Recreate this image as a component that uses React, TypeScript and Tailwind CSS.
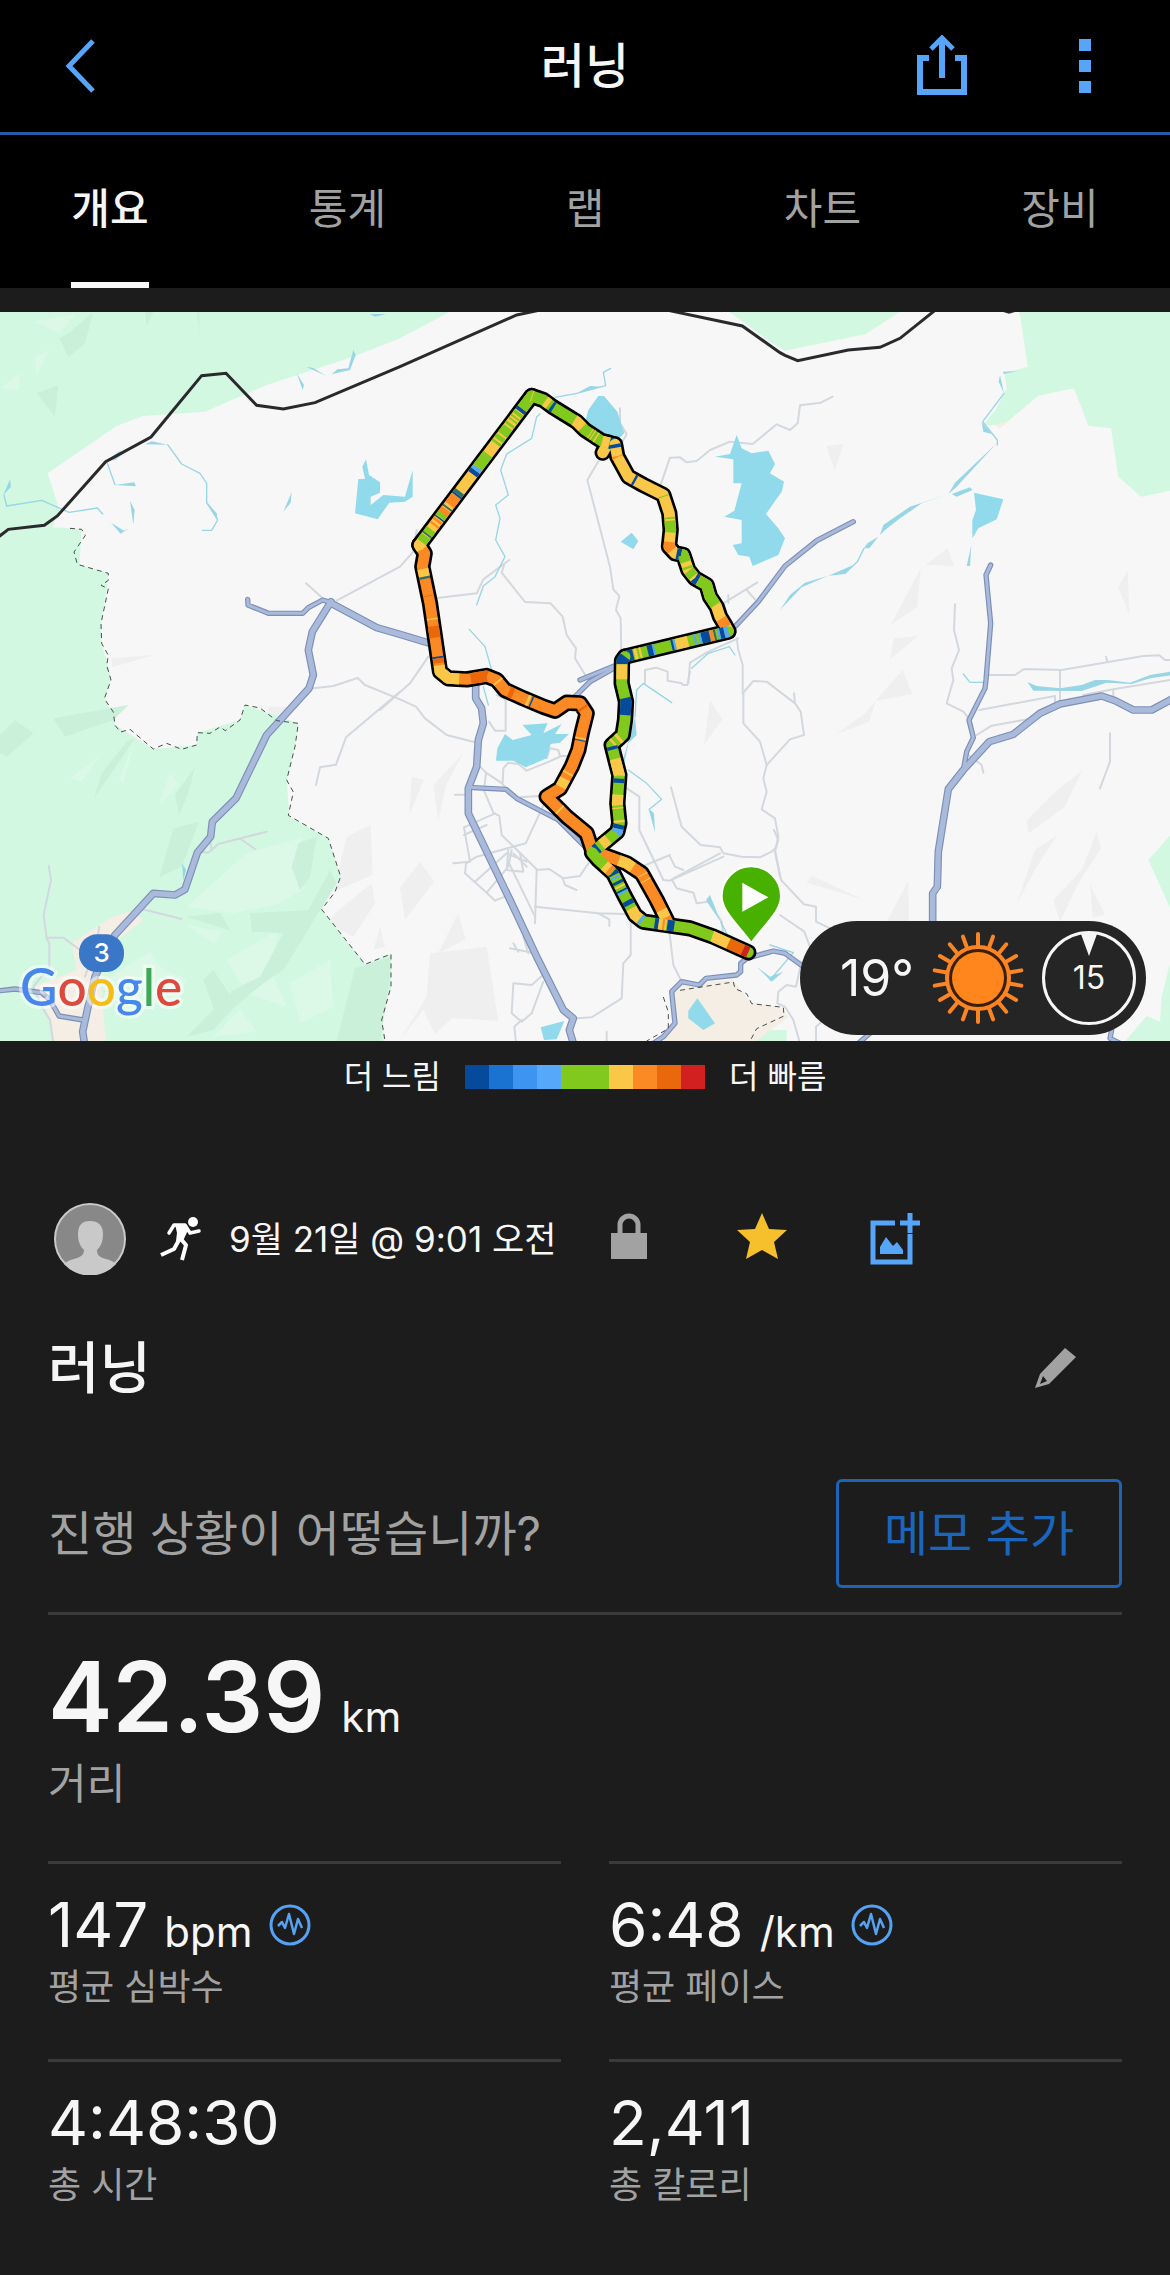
import React from "react";

type Tile = "nw" | "n" | "ne" | "sw" | "s" | "se";
type Shape = [Tile, string];
// start %, length %, color
type Band = [number, number, string];
type Leg = { d: string; base: string; bands: Band[] };

const TILE_OFFSET: Record<Tile, string> = {
  nw: "translate(0 -6)",
  n: "translate(1140 -6)",
  ne: "translate(2310 -6)",
  sw: "translate(0 1074)",
  s: "translate(1140 1074)",
  se: "translate(2310 1074)",
};

const NAVY = "#054a9b";
const BLUE = "#56a8fb";
const GREEN = "#82c91e";
const YELLOW = "#fac748";
const ORANGE = "#fb8a24";
const DEEP = "#ea670c";
const RED = "#d22020";
const TEAL = "#2f6f6b";

const FORESTS: Shape[] = [
  ["nw", "M0 0H1360L1200 85L1060 140L800 225L615 305L430 318L350 348L143 490L178 600L158 652L245 657L238 765L325 790L320 840L303 940L305 1000L328 1080L333 1110L313 1170L340 1210L345 1245L460 1317L590 1305L592 1268L720 1230L735 1185L895 1240L885 1310L860 1410L868 1520L985 1585L1022 1700L965 1798L1095 1963L1173 1932L1173 2030L1145 2130L1155 2200H0Z"],
  ["ne", "M-130 0L0 95L45 122L285 73L400 0Z"],
  ["ne", "M745 0H1210V540L1113 560L1045 500L1023 355L955 347L912 235L805 257L700 345L640 345L680 295L710 235L703 190L773 170L752 25Z"],
  ["se", "M1210 485L1135 570L1210 735Z"],
  ["se", "M1210 840L1175 980L1170 1055L1130 1038L1060 1120H1210Z"],
  ["s", "M1120 1120L1165 1080H1220V1120Z"],
];

const FOREST_DARK: Shape[] = [
  ["nw", "M200 75L280 6L255 100L205 142L178 85Z"],
  ["nw", "M110 250L175 225L165 320Z"],
  ["nw", "M435 6H460L440 48Z"],
  ["nw", "M590 6H598V70Z"],
  ["sw", "M0 195L45 150L100 190L20 262L0 250Z"],
  ["sw", "M160 145L385 105L340 150L195 200Z"],
  ["sw", "M380 215L405 205L330 315L282 385L305 310Z"],
  ["sw", "M585 290L565 370L537 435L525 375Z"],
  ["sw", "M520 475L597 455L545 590L478 622Z"],
  ["sw", "M560 740L660 728L692 782Z"],
  ["sw", "M750 730L925 720L990 600L1010 640L960 720L900 820L850 900L790 940L705 1010L640 1080L560 1100L700 960L780 920L850 790L755 785Z"],
  ["sw", "M1065 895L1173 860L1165 960L1140 1113H1010Z"],
  ["sw", "M610 930L640 900L690 975L650 1040Z"],
  ["sw", "M895 520L950 500L930 620L900 660L875 590Z"],
];

const FOREST_LIGHT: Shape[] = [
  ["nw", "M105 35L225 12L180 70Z"],
  ["nw", "M105 140L150 120L108 195Z"],
  ["nw", "M0 235L60 190L55 240Z"],
  ["sw", "M298 258L210 325L245 333Z"],
  ["sw", "M400 225L357 330L370 340Z"],
  ["sw", "M510 310L540 345L478 402Z"],
  ["sw", "M560 710L740 550L905 503L880 600L915 655L840 700L700 730Z"],
  ["sw", "M560 765L662 785L642 822Z"],
  ["sw", "M330 920L450 845L480 890L560 930L520 1010L400 990Z"],
  ["sw", "M680 870L835 780L810 900L860 1010L740 970Z"],
  ["sw", "M870 940L990 870L1000 1010L900 1060Z"],
  ["sw", "M640 1100L720 1020L770 1085Z"],
];

const SHADES: Shape[] = [
  ["nw", "M335 1045L465 1035L335 1072Z"],
  ["sw", "M803 110H860L840 150L805 140Z"],
  ["sw", "M1040 500L1112 465L1118 615L1000 665Z"],
  ["sw", "M1005 730L1115 640L1125 700L1060 800L985 760Z"],
  ["sw", "M1140 770L1155 830L1120 840Z"],
  ["s", "M250 250L200 340L175 450L160 345Z"],
  ["s", "M95 320L132 330L88 435Z"],
  ["s", "M120 575L162 635L75 750L60 655Z"],
  ["s", "M150 850L320 830L355 1052L215 1045L165 1092L130 1020L60 1110L140 980Z"],
  ["s", "M235 730L257 808L175 850Z"],
  ["s", "M990 90L1027 148L972 225Z"],
  ["ne", "M168 408L220 402L195 480Z"],
  ["ne", "M452 775L442 890L362 945Z"],
  ["ne", "M532 715L552 768L467 765Z"],
  ["ne", "M372 985L445 978L360 1048Z"],
  ["ne", "M1073 780L1078 915L1045 832Z"],
  ["se", "M398 0L427 72L318 92L298 155L200 192L285 130Z"],
  ["se", "M935 303L885 410L775 490L770 452L860 362Z"],
  ["se", "M860 497L795 600L740 702L795 540Z"],
  ["se", "M980 485L993 535L925 640L870 755L850 690L935 600Z"],
  ["se", "M960 643L1005 735L968 742Z"],
  ["se", "M415 632L417 755H350Z"],
  ["se", "M125 617L278 688L110 638Z"],
];

const TOWNS: Shape[] = [
  ["sw", "M335 740L400 722L430 750L330 830L300 910L318 1120H165L140 1020L100 950L230 900L215 820Z"],
  ["s", "M900 940L1060 930L1110 995L1200 1012L1225 1040L1180 1075L1120 1120H850L880 1060L880 965Z"],
  ["ne", "M675 345L722 330L690 355Z"],
];

const LAKES: Shape[] = [
  ["nw", "M1098 448L1107 495L1140 517V548L1112 560V585L1150 555L1215 560L1238 480V560L1215 575L1168 578L1133 628L1065 610L1075 507H1095L1087 470Z"],
  ["n", "M655 258H672L712 305L733 370L705 395L617 330L625 300Z"],
  ["n", "M755 668L775 693L760 718L722 695Z"],
  ["n", "M1070 375L1085 415L1115 430L1165 422L1185 462L1170 490L1212 515L1205 545L1158 612L1195 655L1215 685L1195 735L1118 768L1108 740L1075 735L1058 705L1085 700V630L1033 620L1063 602L1085 520H1060V448L1005 440L1050 432Z"],
  ["ne", "M612 548L700 568L680 628L625 655L607 685V630L618 600Z"],
  ["s", "M375 192L398 210L455 195L427 165L503 160L490 190L545 162L525 192H567L540 218L512 222L500 265L437 292L400 272H348L352 235Z"],
  ["s", "M482 1072L553 1053L530 1108L492 1110Z"],
  ["s", "M952 985L1005 1060L970 1080L925 1045V1022Z"],
];

const STREAM_FILLS: Shape[] = [
  ["nw", "M1110 12H1158L1125 20Z"],
  ["nw", "M1060 120L1067 135L1050 180L995 193L1012 178L1045 175Z"],
  ["nw", "M918 170L940 174L978 197Z"],
  ["nw", "M890 190L912 225L908 240Z"],
  ["nw", "M320 452L355 425L385 420L345 450Z"],
  ["nw", "M435 403L455 394L503 404Z"],
  ["nw", "M345 525L403 517L408 529Z"],
  ["nw", "M390 573L404 600L400 645Z"],
  ["nw", "M333 638L372 662L388 655L362 671Z"],
  ["nw", "M875 547L872 578L850 605Z"],
  ["nw", "M30 508L33 530L10 555Z"],
  ["nw", "M620 575L650 610L653 632Z"],
  ["n", "M590 250L630 228L665 230Z"],
  ["ne", "M635 335L665 372L640 365Z"],
  ["ne", "M700 185L745 183L700 192Z"],
  ["ne", "M690 195L702 250L686 215Z"],
  ["ne", "M680 400L560 530L535 553L555 518Z"],
  ["ne", "M535 552L455 580L390 625L345 660L330 675L340 645L420 590Z"],
  ["ne", "M600 532L608 540L560 560L545 552Z"],
  ["ne", "M325 680L298 715L282 715L292 700Z"],
  ["ne", "M250 765L225 792L175 797Z"],
  ["ne", "M175 797L95 832L30 900L60 855L105 818Z"],
  ["ne", "M604 705L600 768H590Z"],
  ["se", "M772 36L800 48L870 55L935 45L975 30L1015 30L1080 38L1140 15L1210 4V15L1140 25L1085 42L1010 38L935 63L790 62Z"],
  ["s", "M805 415L822 430L825 487Z"],
  ["s", "M990 675L1000 700L1022 755L978 690Z"],
  ["s", "M1130 890L1170 920L1210 905L1175 935Z"],
  ["s", "M765 140L770 195L745 220L733 280L730 265L745 215Z"],
  ["sw", "M546 580L558 600L550 632Z"],
];

const STREAMS: Shape[] = [
  ["nw", "M322 460L345 524"],
  ["nw", "M503 404L545 462L600 490L620 520V578L653 630L635 661H607"],
  ["nw", "M12 555L20 588L125 571L207 607L292 594L308 612"],
  ["n", "M692 175L670 187L677 227L590 250L525 262"],
  ["n", "M480 312L470 320L455 385L380 432L362 480L385 555L347 585L360 625L347 690L375 740L345 800L310 828L290 885"],
  ["n", "M268 958L315 1010L335 1080"],
  ["n", "M935 1075L985 1030L1048 1010L1065 1035"],
  ["ne", "M702 250L638 335L682 390V405"],
  ["ne", "M282 715L262 755L225 790"],
  ["s", "M310 50L325 105"],
  ["s", "M765 140L770 60L790 40L875 98"],
  ["s", "M745 300L800 340L845 388L808 418"],
  ["s", "M1022 755L1045 800"],
  ["se", "M0 825L70 848L0 930"],
  ["se", "M580 12L600 37H650"],
];

const STREETS: Shape[] = [
  ["nw", "M918 820L965 862"],
  ["nw", "M1010 872L1200 770L1240 725L1250 660"],
  ["n", "M165 865L290 850L310 808L388 750"],
  ["n", "M372 765L365 788L435 876L512 880L548 920L560 975L588 1015L585 1045L625 1110"],
  ["n", "M663 440L622 510L690 770L700 838L718 858L708 900L722 925L724 1030"],
  ["n", "M720 295V340L740 372L725 400"],
  ["n", "M840 530L870 443L900 442L920 457L950 453L990 420L1050 395L1118 402L1190 343L1230 360L1253 340L1260 286L1322 278L1358 260"],
  ["n", "M1030 880L1132 817"],
  ["n", "M1100 840L1125 868"],
  ["n", "M1045 855V880"],
  ["n", "M1070 985L1075 1020L1088 1065V1150"],
  ["n", "M1075 985L985 1025L930 1058L925 1120"],
  ["n", "M795 1120V1080L828 1073L863 1085V1112L905 1120L908 1125H922L930 1085"],
  ["n", "M145 1040L90 1120L0 1200"],
  ["ne", "M555 883L552 960L567 1020L545 1075L550 1110L530 1180L580 1205L600 1230"],
  ["ne", "M655 1095H735L762 1077L875 1080L1120 1038L1168 1036L1185 1050H1210"],
  ["ne", "M1008 1040L1012 1055M870 1080V1180"],
  ["sw", "M940 55L1000 48L1073 24L1095 45L1200 88L1248 110L1275 145L1340 195L1425 217"],
  ["sw", "M1200 65L1038 202L1008 284L960 292L948 345"],
  ["sw", "M600 545L625 548L655 522L800 485M722 507L765 537M635 540L630 510"],
  ["sw", "M425 717L545 747"],
  ["sw", "M146 587L153 630L131 735L140 805L148 820V890L100 950L125 1010L150 1050L160 1120"],
  ["sw", "M140 803H190L240 840"],
  ["sw", "M298 770L290 820L255 920"],
  ["s", "M300 290L318 308L363 338L400 375"],
  ["s", "M368 338L370 295L385 278L415 282L440 302L500 278L545 258H560"],
  ["s", "M500 265L510 235L535 240L540 258"],
  ["s", "M327 155L345 182H377V90L350 75"],
  ["s", "M225 374H260M420 382L478 378"],
  ["s", "M318 308L312 362L340 428L358 438L365 495L470 598L465 760"],
  ["s", "M500 385L437 520L290 560L258 580L255 610L320 668L345 692L375 680"],
  ["s", "M252 472L345 430M252 472L270 575L220 580M252 495L320 465"],
  ["s", "M320 668L385 590L395 540M285 635L380 550L440 575"],
  ["s", "M385 540L380 600L430 605L420 550M400 550L440 590"],
  ["s", "M385 575L465 740M470 600L508 597L550 625L600 618L625 580"],
  ["s", "M548 625L555 645L590 660"],
  ["s", "M465 710L655 730L735 732L760 745"],
  ["s", "M655 730L688 748V768"],
  ["s", "M465 850L390 835M430 800L445 850M400 820L415 845"],
  ["s", "M400 940L455 945L500 905M400 940L395 1030L425 1055L455 1030L490 935"],
  ["s", "M425 1050L403 1070L408 1120"],
  ["s", "M590 1045L635 1042L725 985L730 880L752 855V755"],
  ["s", "M680 1085V1120"],
  ["s", "M740 355L778 380V480L850 630L870 632L1030 560"],
  ["s", "M785 590L870 555M870 560L885 590L910 600"],
  ["s", "M873 352L905 470L962 525L1020 532L1030 550L1085 560L1140 562L1175 545L1190 530"],
  ["s", "M1020 550L875 628L890 655L940 668L950 700L985 695L1025 755L1030 800"],
  ["s", "M868 785L880 885L905 935"],
  ["s", "M1090 70V160L1140 215L1160 285L1150 325L1160 365L1145 418L1185 445L1195 500L1185 545L1200 620"],
  ["s", "M1088 70L1120 33L1160 35L1245 100L1262 125L1272 195L1230 208L1160 285"],
  ["s", "M1245 100L1242 70"],
  ["se", "M12 480L25 510L15 540L33 630L102 703L138 710V755L180 775"],
  ["se", "M30 735L103 785L120 830"],
  ["se", "M90 895L78 950L50 945L25 965L22 1000L45 1010L70 1050L90 1120"],
  ["se", "M138 1120V1070L160 1050"],
  ["se", "M628 120L855 78V98"],
  ["se", "M620 195L665 167L790 145"],
  ["se", "M1030 85V58L940 75M1030 58L1210 28"],
  ["se", "M1020 190V275L990 355"],
  ["se", "M595 255L635 285L640 308"],
];

const HIGHWAYS: Shape[] = [
  ["nw", "M743 868L744 885L805 910H908L925 893L968 870L993 878"],
  ["n", "M1065 950L1135 875L1215 768L1310 692L1420 635"],
  ["n", "M600 1110L710 1065"],
  ["s", "M720 -15L630 35L580 85"],
  ["s", "M265 352L378 358L410 385L535 450L620 535"],
  ["s", "M820 1120L850 1100L885 1060L875 965L905 935L958 945L978 925L1070 915L1082 905V880L1100 865L1180 843L1215 850L1270 890"],
  ["ne", "M662 765L648 795L662 940L648 1110L645 1135L597 1230L610 1283L590 1325L580 1380"],
  ["sw", "M0 962L45 957L125 968L150 990L177 1038L250 1050"],
  ["se", "M265 1120L300 1090M1025 1080L1020 1105L1050 1120"],
];

const TRUNKS: Shape[] = [
  ["nw", "M990 878L1130 953L1200 973L1290 1000"],
  ["sw", "M993 -205L937 -115L925 -60L940 15L927 55L800 195L708 385L637 455L632 500L592 548L555 658L525 675L460 670L345 795L285 920L262 1020L248 1085L255 1130"],
  ["s", "M287 45V85L305 115L310 160L295 210L290 290L265 355V430L390 690L470 860L550 1020L580 1045L568 1080L580 1120"],
  ["se", "M1210 85L1145 120H1090L1035 92L995 78L870 102L810 130L730 193L658 215L580 300L535 357L505 545L502 650L488 670V770"],
];

const LEGS: Leg[] = [
  {
    d: "M118 705L134 730L127 770L150 880L180 1085L205 1105L260 1108L320 1098L350 1110L375 1140L430 1165L490 1190L525 1202L560 1178L600 1180L620 1210L605 1270L595 1320L575 1370L540 1435L500 1460L560 1520L620 1570L638 1625",
    base: ORANGE,
    bands: [[0, 1, YELLOW], [5.5, 1.7, YELLOW], [7.2, 0.5, TEAL], [11.3, 0.2, DEEP], [16.3, 0.3, YELLOW], [18, 2.5, DEEP], [24.6, 0.4, NAVY], [25, 1, DEEP], [26.5, 6, YELLOW], [35, 3.5, DEEP], [41, 0.4, YELLOW], [44.5, 1, DEEP], [48.7, 0.6, YELLOW], [49.6, 0.3, NAVY], [62, 0.5, DEEP], [69, 0.3, YELLOW], [69.5, 0.2, NAVY], [77, 0.4, YELLOW], [78.5, 2, YELLOW], [88, 0.4, YELLOW]],
  },
  {
    d: "M650 1627L740 1660L785 1690L830 1770L865 1840",
    base: ORANGE,
    bands: [[22, 15, YELLOW], [48, 1, YELLOW], [54, 1, YELLOW], [86, 8, YELLOW]],
  },
  {
    d: "M118 705L455 258",
    base: YELLOW,
    bands: [[2, 4, GREEN], [6.5, 1, TEAL], [7.5, 3, GREEN], [13, 1.2, ORANGE], [15.5, 1.5, ORANGE], [17.5, 0.8, NAVY], [18.5, 3, GREEN], [21, 3, ORANGE], [24.5, 1, TEAL], [27, 6, ORANGE], [33, 1, NAVY], [34, 2, TEAL], [47.5, 2.5, NAVY], [50, 2, BLUE], [52, 9, GREEN], [68, 1.5, GREEN], [70.5, 2.5, GREEN], [74, 5, GREEN], [80, 1.5, GREEN], [83, 1, GREEN], [85, 1, GREEN], [87, 2, GREEN], [89.5, 2, NAVY], [91.5, 7, GREEN]],
  },
  {
    d: "M685 398L668 428",
    base: YELLOW,
    bands: [[0, 45, GREEN]],
  },
  {
    d: "M455 258L490 270L520 292L590 335L615 360L665 393L703 403",
    base: GREEN,
    bands: [[0, 1, YELLOW], [15, 5, YELLOW], [23, 3, NAVY], [51, 11, YELLOW], [72, 1, YELLOW], [75, 1, YELLOW], [79, 1.5, YELLOW], [87, 8, YELLOW], [95, 5, NAVY]],
  },
  {
    d: "M705 403L712 440L745 500L790 525L850 555L868 610L872 660L867 710L885 730L910 735L925 780L945 805L980 825L990 860L1010 890L1020 920L1035 945L1045 963",
    base: YELLOW,
    bands: [[0, 1.5, NAVY], [5, 0.5, ORANGE], [17.5, 1, NAVY], [32, 0.5, GREEN], [41.5, 0.7, GREEN], [43, 5, GREEN], [52, 4, ORANGE], [58.5, 2, NAVY], [60.5, 4, GREEN], [66.5, 1, GREEN], [68.5, 3, GREEN], [72.5, 1.7, NAVY], [74.2, 13.5, GREEN], [94, 4, ORANGE]],
  },
  {
    d: "M1045 965L735 1040",
    base: GREEN,
    bands: [[0, 4, BLUE], [4, 4, NAVY], [8, 2, BLUE], [12, 2, TEAL], [14, 4, ORANGE], [18, 8, NAVY], [26, 2, BLUE], [31, 2, BLUE], [39, 12, YELLOW], [51, 2, BLUE], [53, 2, NAVY], [71, 2, BLUE], [73, 5, NAVY], [84, 2, YELLOW], [88, 3, YELLOW], [92, 8, NAVY]],
  },
  {
    d: "M735 1040L726 1052L725 1120L738 1175L735 1230L728 1275L695 1305L705 1345L718 1395L712 1480L718 1540L712 1565L640 1625",
    base: GREEN,
    bands: [[0, 4, NAVY], [4, 7, YELLOW], [20, 8, NAVY], [39, 1.5, YELLOW], [42.5, 1, YELLOW], [45, 1.5, NAVY], [51, 8, YELLOW], [60.5, 2, NAVY], [68, 5, YELLOW], [74, 0.6, YELLOW], [80, 1, YELLOW], [82, 2, NAVY], [84, 2, BLUE], [91, 4, YELLOW], [97, 2, NAVY]],
  },
  {
    d: "M636 1628L655 1650L700 1690L735 1760L765 1815L790 1835L860 1845L930 1855L1000 1880L1105 1927",
    base: GREEN,
    bands: [[9, 3, YELLOW], [12, 2, ORANGE], [14.5, 1.5, NAVY], [17, 1, BLUE], [19.5, 1.5, NAVY], [22, 1, YELLOW], [24.3, 1, NAVY], [25.3, 1, BLUE], [30.5, 2.5, NAVY], [35, 7, YELLOW], [42, 1.5, BLUE], [50, 2, NAVY], [52, 4, YELLOW], [54, 1, ORANGE], [56.5, 3.5, NAVY], [80, 9, YELLOW], [89, 8, DEEP], [97, 3, RED]],
  },
];

function Fills({ shapes, color }: { shapes: Shape[]; color: string }) {
  return (
    <g fill={color}>
      {shapes.map(([tile, d], i) => (
        <path key={i} transform={TILE_OFFSET[tile]} d={d} />
      ))}
    </g>
  );
}

function Lines({ shapes, color, width }: { shapes: Shape[]; color: string; width: number }) {
  return (
    <g fill="none" stroke={color} strokeWidth={width} strokeLinejoin="round" strokeLinecap="round">
      {shapes.map(([tile, d], i) => (
        <path key={i} transform={TILE_OFFSET[tile]} d={d} />
      ))}
    </g>
  );
}

function RouteLine() {
  return (
    <g transform={TILE_OFFSET.n} fill="none" strokeLinejoin="round">
      {LEGS.map((leg, i) => (
        <path key={i} d={leg.d} stroke="#000" strokeWidth={49} strokeLinecap="round" />
      ))}
      {LEGS.map((leg, i) => (
        <g key={i} strokeWidth={33}>
          <path d={leg.d} stroke={leg.base} strokeLinecap="round" />
          {leg.bands.map(([start, length, color], j) => (
            <path key={j} d={leg.d} stroke={color} pathLength={100} strokeDasharray={`0 ${start} ${length} 200`} />
          ))}
        </g>
      ))}
    </g>
  );
}

function RouteMap() {
  return (
    <svg viewBox="0 0 3510 2187" className="block w-full bg-[#f7f7f7]" role="img" aria-label="코스 지도">
      <Fills shapes={SHADES} color="#efefef" />
      <Fills shapes={FORESTS} color="#d2f8e2" />
      <Fills shapes={FOREST_LIGHT} color="#dcf9e8" />
      <Fills shapes={FOREST_DARK} color="#caf0da" />
      <Fills shapes={TOWNS} color="#f4eee4" />
      <Lines shapes={STREETS} color="#d3d8de" width={6} />
      <Fills shapes={LAKES} color="#90daec" />
      <Fills shapes={STREAM_FILLS} color="#98d6e6" />
      <Lines shapes={STREAMS} color="#98d6e6" width={4} />
      <Lines shapes={HIGHWAYS} color="#7d8fb8" width={16} />
      <Lines shapes={TRUNKS} color="#7d8fb8" width={23} />
      <Lines shapes={HIGHWAYS} color="#a9bada" width={9} />
      <Lines shapes={TRUNKS} color="#a9bada" width={16} />

      <g fill="none" stroke="#4a4f4c" strokeWidth={3} strokeDasharray="15 12">
        <path d="M210 649L245 652L256 670L222 720L232 757L325 784L325 805L303 820L325 830L303 934L305 994L325 1030L320 1060L333 1104L313 1160L340 1200L345 1240L362 1260L390 1252L460 1311L500 1294L545 1312L590 1299L592 1262L630 1264L660 1245L676 1256L720 1224L735 1179L780 1188L830 1226L895 1234L885 1304L860 1404L880 1440L865 1510L985 1579L1022 1694L1005 1740L965 1792L1095 1957L1173 1926L1173 2024L1145 2124L1155 2187" />
        <path d="M1990 2055L2005 2100V2150L1940 2187M2040 2035L2200 2010L2205 2030L2240 2045L2255 2075L2350 2086L2352 2112L2270 2150L2250 2187" />
      </g>
      <path
        fill="none"
        stroke="#2a2a2c"
        strokeWidth={9}
        d="M-10 679L25 652L133 640L172 612L317 449L453 375L605 191L678 184L770 280L850 291L945 272L1200 164L1550 9L1640 -10M2005 -5L2227 42L2340 122L2355 130L2393 146L2545 114L2640 106L2700 79L2805 -5"
      />
      <path fill="#2a2a2c" d="M3010 0H3045L3027 5Z" />

      <RouteLine />

      {/* start pin */}
      <path
        d="M2254 1893C2215 1838 2165 1800 2165 1752A89 89 0 0 1 2343 1752C2343 1800 2293 1838 2254 1893Z"
        fill="#48b100"
        stroke="#fff"
        strokeWidth={6}
      />
      <path d="M2227 1712L2305 1756L2227 1799Z" fill="#fff" />

      {/* road number */}
      <rect x={237} y={1867} width={135} height={113} rx={54} fill="#3a77c6" />
      <text x={305} y={1951} textAnchor="middle" fill="#fff" className="font-['Inter'] text-[78px] font-medium">3</text>

      <text x={60} y={2081} className="font-['Lato'] text-[154px] font-medium" stroke="#fff" strokeOpacity={0.5} strokeWidth={20} strokeLinejoin="round" paintOrder="stroke">
        <tspan fill="#4787ed">G</tspan>
        <tspan fill="#dd4a3d">o</tspan>
        <tspan fill="#f5bd16">o</tspan>
        <tspan fill="#4787ed">g</tspan>
        <tspan fill="#3da956">l</tspan>
        <tspan fill="#dd4a3d">e</tspan>
      </text>
    </svg>
  );
}

function Weather() {
  const rays = Array.from({ length: 18 }, (_, i) => i * 20);
  return (
    <div className="absolute right-6 bottom-1.5 flex h-[114px] w-[346px] items-center rounded-full bg-[#252525] pl-10 text-[#f6f6f6]">
      <span className="w-[92px] text-[50px] leading-[60px]">19°</span>
      <svg viewBox="0 0 92 92" className="size-[92px]" role="img" aria-label="맑음">
        <circle cx={46} cy={46} r={30} fill="#3a1f08" />
        <circle cx={46} cy={46} r={26} fill="#ff861c" />
        <g fill="none" stroke="#fb8523" strokeWidth={4} strokeLinecap="round">
          <circle cx={46} cy={46} r={31} />
          {rays.map((a) => (
            <path key={a} d="M46 13V2" transform={`rotate(${a} 46 46)`} />
          ))}
        </g>
      </svg>
      <div className="relative ml-[18px] flex size-[94px] items-center justify-center rounded-full border-[3px] border-[#f6f6f6] text-[32px] leading-10">
        <svg viewBox="0 0 16 22" className="absolute top-0 left-9 h-[22px] w-4" aria-hidden="true">
          <path d="M0 0H16L8 22Z" fill="#f6f6f6" />
        </svg>
        15
      </div>
    </div>
  );
}

const TABS = ["개요", "통계", "랩", "차트", "장비"];

function PulseIcon() {
  return (
    <svg viewBox="0 0 42 42" className="size-[42px]" fill="none" stroke="#56a2f2" aria-hidden="true">
      <circle cx={21} cy={21} r={19} strokeWidth={3} />
      <path d="M9 22L13 18L16 24L20 10L25 30L29 15L33 24" strokeWidth={2.5} strokeLinejoin="round" />
    </svg>
  );
}

function Stat({ label, value, unit, pulse }: { label: string; value: string; unit?: string; pulse?: boolean }) {
  return (
    <div className="flex flex-col-reverse border-t-[3px] border-[#3a3a3a] pt-[29px] pb-[50px]">
      <dt className="mt-2 text-[36px] leading-[44px] text-[#a2a2a2]">{label}</dt>
      <dd className="flex items-center">
        <span className="text-[62px] leading-[64px]">
          {value}
          {unit && <span className="ml-4 text-[42px] leading-none">{unit}</span>}
        </span>
        {pulse && (
          <button type="button" aria-label={`${label} 차트`} className="ml-4">
            <PulseIcon />
          </button>
        )}
      </dd>
    </div>
  );
}

const SCALE = [
  "bg-[#054a9b]",
  "bg-[#1a73d1]",
  "bg-[#3d95f1]",
  "bg-[#56a8fb]",
  "bg-[#82c91e]",
  "bg-[#82c91e]",
  "bg-[#fac748]",
  "bg-[#fb8a24]",
  "bg-[#ea670c]",
  "bg-[#d22020]",
];

export default function App() {
  return (
    <div className="min-h-screen bg-[#1c1c1c] font-['Inter','Noto_Sans_CJK_KR',sans-serif] text-[#f6f6f6]">
      <header className="flex h-[135px] items-center justify-between border-b-[3px] border-[#265ca6] bg-black px-[65px]">
        <button type="button" aria-label="뒤로" className="flex w-[202px]">
          <svg viewBox="0 0 30 54" className="h-[54px] w-[30px]" fill="none" stroke="#56a5f8" strokeWidth={5}>
            <path d="M28 2L4 27L28 52" />
          </svg>
        </button>
        <h1 className="text-[48px] leading-[56px] font-medium">러닝</h1>
        <div className="flex w-[202px] items-center justify-end gap-[98px]">
          <button type="button" aria-label="공유">
            <svg viewBox="0 0 50 62" className="h-[62px] w-[50px]" fill="none" stroke="#56a5f8">
              <path d="M12 23H3V57H47V23H38" strokeWidth={6} />
              <path d="M25 43V6" strokeWidth={6} />
              <path d="M14 14L25 3L36 14" strokeWidth={5} />
            </svg>
          </button>
          <button type="button" aria-label="더보기" className="flex w-10 flex-col items-center gap-[9px]">
            <i className="size-3 bg-[#56a5f8]" />
            <i className="size-3 bg-[#56a5f8]" />
            <i className="size-3 bg-[#56a5f8]" />
          </button>
        </div>
      </header>

      <nav role="tablist" className="flex h-[153px] justify-between bg-black px-[71px]">
        {TABS.map((tab, i) => (
          <button
            key={tab}
            type="button"
            role="tab"
            aria-selected={i === 0}
            className="min-w-[78px] border-b-[6px] border-transparent text-center text-[42px] leading-[50px] text-[#a2a2a2] aria-selected:border-[#f6f6f6] aria-selected:font-medium aria-selected:text-[#f6f6f6]"
          >
            {tab}
          </button>
        ))}
      </nav>

      <main>
        <div className="relative mt-6">
          <RouteMap />
          <Weather />
        </div>

        <div className="flex h-[72px] items-center justify-center gap-6 text-[32px] leading-9">
          <span>더 느림</span>
          <div className="flex">
            {SCALE.map((color, i) => (
              <i key={i} className={`size-6 ${color}`} />
            ))}
          </div>
          <span>더 빠름</span>
        </div>

        <div className="px-12">
          <div className="mt-[90px] flex h-[72px] items-center pl-1.5">
            <svg viewBox="0 0 72 72" className="size-[72px]" role="img" aria-label="프로필">
              <circle cx={36} cy={36} r={35} fill="#888" />
              <path d="M36 18C44 18 49 22 49 31C49 40 46 44 43 47C43 52 45 54 52 56C57 57 60 59 62 61A35 35 0 0 1 10 61C12 59 15 57 20 56C27 54 30 52 30 47C27 44 24 40 24 31C24 22 28 18 36 18Z" fill="#c9c9c9" />
              <circle cx={36} cy={36} r={35} fill="none" stroke="#c9c9c9" strokeWidth={2} />
            </svg>
            <svg viewBox="0 0 42 44" className="ml-[34px] h-11 w-[42px]" fill="none" stroke="#fff" strokeLinejoin="round" aria-hidden="true">
              <circle cx={33} cy={5} r={5} fill="#fff" stroke="none" />
              <path d="M9 16L14 8H25L30 16L39 14" strokeWidth={3.5} strokeLinecap="round" />
              <path d="M15 7L26 8L28 13L23 24L16 24L17 16Z" fill="#fff" stroke="none" />
              <path d="M19 23L14 32L1 38" strokeWidth={4} />
              <path d="M20 21L26 28L22 43" strokeWidth={4} />
            </svg>
            <time className="ml-[27px] text-[35px] leading-[44px]">9월 21일 @ 9:01 오전</time>
            <div className="ml-1.5 flex">
              <button type="button" aria-label="비공개" className="flex w-[133px] justify-center">
                <svg viewBox="0 0 36 46" className="h-[46px] w-9">
                  <path d="M0 20H36V46H0Z" fill="#a2a2a2" />
                  <path d="M9 22V12A9 9 0 0 1 27 12V22" fill="none" stroke="#a2a2a2" strokeWidth={5} />
                </svg>
              </button>
              <button type="button" aria-label="즐겨찾기" className="flex w-[133px] justify-center">
                <svg viewBox="0 0 50 46" className="h-[46px] w-[50px]">
                  <path d="M25 0L32 16L50 17L37 29L41 46L25 37L9 46L13 29L0 17L18 16Z" fill="#f6c02c" />
                </svg>
              </button>
              <button type="button" aria-label="사진 추가" className="flex w-[133px] justify-center">
                <svg viewBox="0 0 50 52" className="h-[52px] w-[50px]" fill="none" stroke="#56a5f8" strokeWidth={5}>
                  <path d="M25 10H3V49H40V21" />
                  <path d="M40 0V20M30 10H50" />
                  <path d="M10 34L16 24L23 33L27 29L33 37V41H10Z" fill="#56a5f8" stroke="none" />
                </svg>
              </button>
            </div>
          </div>

          <div className="mt-[57px] flex h-[72px] items-center justify-between pr-[45px]">
            <h2 className="text-[56px] leading-[64px] font-medium">러닝</h2>
            <button type="button" aria-label="이름 편집">
              <svg viewBox="0 0 42 40" className="h-10 w-[42px]">
                <path d="M0 40L5 26L30 0L41 9L14 36ZM8 28L5 36L12 33Z" fill="#a2a2a2" fillRule="evenodd" />
              </svg>
            </button>
          </div>

          <div className="mt-[75px] flex items-center justify-between border-b-[3px] border-[#3a3a3a] pb-6 text-[48px] leading-[60px]">
            <p className="text-[#a2a2a2]">진행 상황이 어떻습니까?</p>
            <button type="button" className="h-[109px] w-[286px] rounded-md border-[3px] border-[#1d64b4] text-[#1b66bd]">
              메모 추가
            </button>
          </div>

          <dl>
            <div className="flex flex-col-reverse pt-8 pb-[52px]">
              <dt className="mt-3 text-[42px] leading-[50px] text-[#a2a2a2]">거리</dt>
              <dd className="text-[97px] leading-[100px] font-semibold">
                42.39
                <span className="ml-4 text-[42px] leading-none font-normal">km</span>
              </dd>
            </div>
            <div className="grid grid-cols-2 gap-x-12">
              <Stat label="평균 심박수" value="147" unit="bpm" pulse />
              <Stat label="평균 페이스" value="6:48" unit="/km" pulse />
              <Stat label="총 시간" value="4:48:30" />
              <Stat label="총 칼로리" value="2,411" />
            </div>
          </dl>
        </div>
      </main>
    </div>
  );
}
